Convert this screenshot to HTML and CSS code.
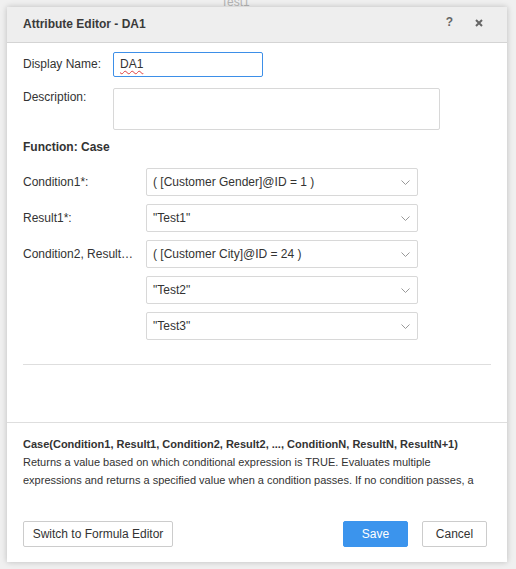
FILE: index.html
```html
<!DOCTYPE html>
<html>
<head>
<meta charset="utf-8">
<link rel="stylesheet" href="styles.css">
</head>
<body>
<div class="backdrop-text">Test1</div>
<div class="dialog">
  <div class="header">
    <span class="title">Attribute Editor - DA1</span>
    <div class="header-tools">
      <span class="help-icon">?</span>
      <svg class="close-icon" width="8" height="8" viewBox="0 0 8 8"><path d="M1 1L7 7M7 1L1 7" stroke="#666" stroke-width="2"/></svg>
    </div>
  </div>
  <div class="body">
    <div class="field-row">
      <label class="field-label">Display Name:</label>
      <div class="name-input"><span class="spell">DA1</span></div>
    </div>
    <div class="field-row desc-row">
      <label class="field-label">Description:</label>
      <div class="desc-input"></div>
    </div>
    <div class="function-title">Function: Case</div>
    <div class="params">
      <div class="param-label">Condition1*:</div>
      <div class="select"><span>( [Customer Gender]@ID = 1 )</span><svg class="chev" width="9" height="5" viewBox="0 0 9 5"><path d="M0.5 0.5L4.5 4.5L8.5 0.5" fill="none" stroke="#999" stroke-width="1"/></svg></div>
      <div class="param-label">Result1*:</div>
      <div class="select"><span>"Test1"</span><svg class="chev" width="9" height="5" viewBox="0 0 9 5"><path d="M0.5 0.5L4.5 4.5L8.5 0.5" fill="none" stroke="#999" stroke-width="1"/></svg></div>
      <div class="param-label">Condition2, Result…</div>
      <div class="select"><span>( [Customer City]@ID = 24 )</span><svg class="chev" width="9" height="5" viewBox="0 0 9 5"><path d="M0.5 0.5L4.5 4.5L8.5 0.5" fill="none" stroke="#999" stroke-width="1"/></svg></div>
      <div class="param-label"></div>
      <div class="select"><span>"Test2"</span><svg class="chev" width="9" height="5" viewBox="0 0 9 5"><path d="M0.5 0.5L4.5 4.5L8.5 0.5" fill="none" stroke="#999" stroke-width="1"/></svg></div>
      <div class="param-label"></div>
      <div class="select"><span>"Test3"</span><svg class="chev" width="9" height="5" viewBox="0 0 9 5"><path d="M0.5 0.5L4.5 4.5L8.5 0.5" fill="none" stroke="#999" stroke-width="1"/></svg></div>
    </div>
    <div class="divider"></div>
  </div>
  <div class="footer">
    <div class="help">
      <div class="help-title">Case(Condition1, Result1, Condition2, Result2, ..., ConditionN, ResultN, ResultN+1)</div>
      <div class="help-text">Returns a value based on which conditional expression is TRUE. Evaluates multiple<br>expressions and returns a specified value when a condition passes. If no condition passes, a default value is returned.</div>
    </div>
    <div class="buttons">
      <button class="btn">Switch to Formula Editor</button>
      <div class="right-buttons">
        <button class="btn btn-primary">Save</button>
        <button class="btn">Cancel</button>
      </div>
    </div>
  </div>
</div>
</body>
</html>
```

FILE: styles.css
```css
* { box-sizing: border-box; }
html, body { margin: 0; padding: 0; }
body {
  width: 516px;
  height: 569px;
  background: #f0f0f0;
  font-family: "Liberation Sans", Arial, sans-serif;
  font-size: 12px;
  color: #333;
  position: relative;
  overflow: hidden;
  padding: 7px 9px 0 7px;
}
.backdrop-text {
  position: absolute;
  left: 221px;
  top: -5px;
  font-size: 12px;
  line-height: 14px;
  color: #b5b5b5;
}
.dialog {
  position: relative;
  width: 500px;
  height: 555px;
  background: #fff;
  box-shadow: 0 0 6px rgba(0,0,0,0.22);
  display: flex;
  flex-direction: column;
}
.header {
  height: 36px;
  flex: none;
  background: #eeeeee;
  border-bottom: 1px solid #d4d4d4;
  display: flex;
  align-items: center;
  justify-content: space-between;
  padding: 0 24px 2px 16px;
}
.title {
  font-weight: bold;
  font-size: 12px;
  color: #3a3a3a;
}
.header-tools {
  display: flex;
  align-items: center;
  gap: 22px;
}
.help-icon {
  font-weight: bold;
  color: #666;
  font-size: 12px;
  line-height: 12px;
  margin-top: -3px;
}
.close-icon { display: block; margin-top: -1px; }
.body {
  flex: 1;
  padding: 9px 16px 0 16px;
}
.field-row {
  display: flex;
  align-items: flex-start;
}
.field-label {
  width: 90px;
  flex: none;
  line-height: 25px;
  color: #333;
}
.desc-row { margin-top: 11px; }
.desc-row .field-label { line-height: 16px; padding-top: 1px; }
.name-input {
  width: 150px;
  height: 25px;
  border: 1px solid #3d8fe8;
  border-radius: 2px;
  padding: 0 6px;
  line-height: 23px;
  color: #333;
}
.spell {
  text-decoration: underline wavy #e04040;
  text-decoration-thickness: 1px;
  text-underline-offset: 2px;
}
.desc-input {
  width: 327px;
  height: 42px;
  border: 1px solid #d8d8d8;
  border-radius: 2px;
}
.function-title {
  margin-top: 9px;
  font-weight: bold;
  line-height: 16px;
  color: #333;
}
.params {
  margin-top: 13px;
  display: grid;
  grid-template-columns: 123px 272px;
  row-gap: 8px;
}
.param-label {
  line-height: 28px;
  color: #333;
  white-space: nowrap;
}
.select {
  height: 28px;
  border: 1px solid #d8d8d8;
  border-radius: 2px;
  display: flex;
  align-items: center;
  justify-content: space-between;
  padding: 0 7px 0 6px;
  color: #333;
}
.chev { display: block; }
.divider {
  margin-top: 24px;
  height: 1px;
  background: #dedede;
}
.footer {
  flex: none;
  border-top: 1px solid #dedede;
  padding: 12px 16px 15px 16px;
}
.help {
  height: 54px;
  overflow: hidden;
  line-height: 18px;
  font-size: 11px;
}
.help-title {
  font-weight: bold;
  color: #333;
  white-space: nowrap;
}
.help-text {
  width: 468px;
  color: #333;
}
.buttons {
  margin-top: 32px;
  display: flex;
  justify-content: space-between;
  padding-right: 4px;
}
.right-buttons {
  display: flex;
  gap: 14px;
}
.btn {
  height: 26px;
  font-family: "Liberation Sans", Arial, sans-serif;
  font-size: 12px;
  color: #333;
  background: #fff;
  border: 1px solid #cccccc;
  border-radius: 2px;
  padding: 0;
  width: 65px;
}
.buttons > .btn { width: 150px; }
.btn-primary {
  background: #3b94ed;
  border-color: #3b94ed;
  color: #fff;
}
```
